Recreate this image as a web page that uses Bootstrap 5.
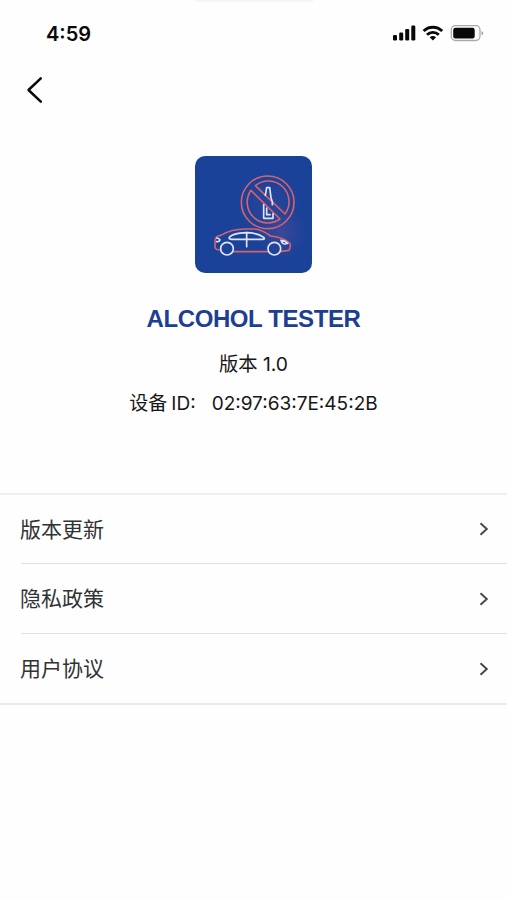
<!DOCTYPE html>
<html lang="zh-CN">
<head>
<meta charset="utf-8">
<meta name="viewport" content="width=device-width, initial-scale=1">
<title>ALCOHOL TESTER</title>
<link href="https://cdn.jsdelivr.net/npm/bootstrap@5.3.0/dist/css/bootstrap.min.css" rel="stylesheet">
<style>
body{font-family:Inter,"Noto Sans CJK SC",sans-serif;background:#fefefe;color:#161616;min-height:900px}
svg{display:block;flex:none}
.notch{width:118px;height:2px;background:#f6f6f6}
.status{height:62px;padding:0 23px 0 46px}
.clock{font-size:20px;font-weight:600;line-height:24px;color:#0a0a0a;padding-top:1px}
.topbar{height:52px;padding-left:26px}
.hero{padding-top:40px;height:377px}
.logo{width:117px;height:117px;border-radius:10px;overflow:hidden;background:#1b4299}
.brand{font:700 24px/30px "Liberation Sans",Arial,sans-serif;letter-spacing:-.4px;color:#1d3f92;margin-top:31px;white-space:nowrap}
.info{font-size:19px;line-height:28px;white-space:nowrap}
.version{margin-top:16px;font-size:19.3px}
.device{margin-top:12px}
.menu{border-top:2px solid #efefef;border-bottom:2px solid #ebebeb}
.entry{height:68px;font-size:21px;color:#303234;margin-left:21px;padding-right:17px}
.entry span{margin-left:-1px;padding-top:1px}
.entry+.entry{border-top:1px solid #e2e2e2;height:70px}
</style>
</head>
<body>
<div class="notch mx-auto"></div>
<header class="status d-flex align-items-center justify-content-between">
<span class="clock">4:59</span>
<svg width="92" height="18" viewBox="392 24 92 18">
<g fill="#080808"><rect x="393" y="35" width="4" height="5.5" rx="1.2"/><rect x="399.2" y="32.5" width="4" height="8" rx="1.2"/><rect x="405.2" y="29" width="4" height="11.5" rx="1.2"/><rect x="411.3" y="25.5" width="4" height="15" rx="1.2"/></g>
<g fill="none" stroke="#080808" stroke-width="2.8"><path d="M423.6 31.1A13.2 13.2 0 0 1 442.2 31.1"/><path d="M427 34.8A8.4 8.4 0 0 1 438.8 34.8"/></g>
<path d="M429.7 37.3Q432.9 34.9 436.1 37.3L432.9 40.6Z" fill="#080808"/>
<rect x="451.3" y="25.7" width="28.7" height="14.8" rx="4.2" fill="none" stroke="#aaa" stroke-width="1.3"/>
<rect x="453.2" y="27.7" width="21.5" height="10.8" rx="2.2" fill="#080808"/>
<path d="M481.6 31v4.6q1.6-.8 1.6-2.3t-1.6-2.3Z" fill="#999"/>
</svg>
</header>
<nav class="topbar d-flex align-items-center"><svg width="18" height="28" viewBox="0 0 18 28" fill="none" stroke="#0a0a0a" stroke-width="2.5" stroke-linecap="round" stroke-linejoin="round"><path d="M14.8 2.4L2.5 14 14.8 25.6"/></svg></nav>
<main>
<section class="hero d-flex flex-column align-items-center">
<div class="logo">
<svg width="117" height="117" viewBox="31 28 351 351">
<defs><radialGradient id="glow"><stop offset="0" stop-color="#8a5497" stop-opacity=".32"/><stop offset="1" stop-color="#3d4a98" stop-opacity="0"/></radialGradient></defs>
<ellipse cx="290" cy="255" rx="85" ry="85" fill="url(#glow)"/>
<ellipse cx="255" cy="167" rx="98" ry="98" fill="url(#glow)" opacity=".5"/>
<g fill="none" stroke="#d6626f" stroke-width="4.8" stroke-linejoin="round" stroke-linecap="round">
<circle cx="249" cy="167" r="79"/>
<path d="M212 117A62 62 0 0 1 301 202Z"/>
<path d="M199 131A62 62 0 0 0 286 217Z"/>
<path d="M107 310Q91 310 91 300L91 282Q92 268 108 266Q142 247 180 247H207Q231 248 258 268Q300 273 315 290Q320 296 313 311L290 314M148 315H248"/>
</g>
<g fill="none" stroke="#dfe4fb" stroke-width="5" stroke-linejoin="round" stroke-linecap="round">
<path d="M242 146L246 123H255L259 153L263 166V174M237 174V215H265V201M246 184V204H256"/>
<path d="M134 272Q140 264 161 260Q210 253 237 272Q242 278 234 278H140Q132 277 134 272ZM186 258V300"/>
<circle cx="127" cy="306" r="19"/><circle cx="269" cy="306" r="19"/>
<path d="M96 274Q105 276 106 280Q104 286 96 285M289 281Q300 281 309 290Q300 294 294 290Z"/>
</g>
</svg>
</div>
<h1 class="brand mb-0">ALCOHOL TESTER</h1>
<div class="info version">版本 1.0</div>
<div class="info device d-flex"><span>设备</span><span class="ms-1">ID:</span><span class="ms-3">02:97:63:7E:45:2B</span></div>
</section>
<section class="menu">
<div class="entry d-flex align-items-center justify-content-between"><span>版本更新</span><svg width="12" height="16" viewBox="0 0 12 16" fill="none" stroke="#444" stroke-width="1.9"><path d="M2.5 2.3L8.8 8 2.5 13.7"/></svg></div>
<div class="entry d-flex align-items-center justify-content-between"><span>隐私政策</span><svg width="12" height="16" viewBox="0 0 12 16" fill="none" stroke="#444" stroke-width="1.9"><path d="M2.5 2.3L8.8 8 2.5 13.7"/></svg></div>
<div class="entry d-flex align-items-center justify-content-between"><span>用户协议</span><svg width="12" height="16" viewBox="0 0 12 16" fill="none" stroke="#444" stroke-width="1.9"><path d="M2.5 2.3L8.8 8 2.5 13.7"/></svg></div>
</section>
</main>
<script src="https://cdn.jsdelivr.net/npm/bootstrap@5.3.0/dist/js/bootstrap.bundle.min.js"></script>
</body>
</html>
